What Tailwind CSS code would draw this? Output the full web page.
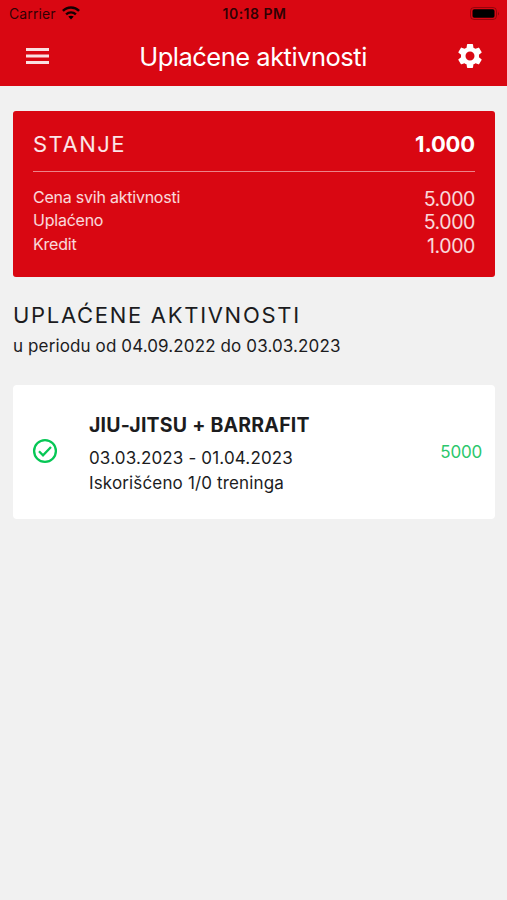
<!DOCTYPE html>
<html lang="sr">
<head>
<meta charset="utf-8">
<title>Uplaćene aktivnosti</title>
<script src="https://cdn.jsdelivr.net/npm/@tailwindcss/browser@4"></script>
</head>
<body class="bg-[#f1f1f1] font-['Inter',sans-serif] text-[#1c1c1e]">
<div class="h-[900px] w-[507px] overflow-hidden">
  <header class="h-[86px] bg-[#d90712]">
    <div class="grid h-[27px] grid-cols-3 items-center pl-[9px] pr-[7px] text-[13.5px] leading-[27px] text-black/80">
      <div class="flex items-center gap-[6px]">
        <span class="text-[14px] tracking-[0.1px]">Carrier</span>
        <svg class="h-[14px] w-[18px] -translate-y-px" viewBox="0 0 18 14" fill="none" stroke="#000" stroke-opacity=".9" stroke-width="2.400"><path d="M.9 4.900C5.300.3 12.700.3 17.100 4.900M4.100 8.300c2.800-2.600 7-2.600 9.800 0"/><path d="M6.300 10.600c1.500-1.300 3.900-1.300 5.400 0L9 13.400z" fill="#000" stroke="none"/></svg>
      </div>
      <span class="text-center text-[14px] font-semibold tracking-[0.5px]">10:18 PM</span>
      <svg class="h-[13px] w-[30px] justify-self-end" viewBox="0 0 30 13"><rect x=".5" y=".5" width="26" height="12" rx="3.500" fill="none" stroke="#000" stroke-opacity=".3"/><rect x="2.500" y="2.200" width="22" height="8.600" rx="1.800"/><path d="M28 4.500q1.500 2 0 4z" opacity=".4"/></svg>
    </div>
    <div class="flex h-[59px] items-center justify-between pl-[26px] pr-[22px] text-white">
      <svg class="h-[16px] w-[23px] -translate-y-px" viewBox="0 0 23 16" fill="currentColor" opacity=".88"><path d="M0 0h23v3H0zM0 6.500h23v3H0zM0 13h23V16H0z"/></svg>
      <h1 class="pl-[2px] pt-px text-[25.500px] tracking-[-0.500px]">Uplaćene aktivnosti</h1>
      <svg class="size-[30px] -translate-y-px" viewBox="0 0 24 24" fill="currentColor"><path d="M19.140 12.940c.04-.3.06-.61.06-.94 0-.32-.02-.64-.07-.94l2.030-1.580a.49.49 0 0 0 .12-.61l-1.920-3.320a.488.488 0 0 0-.59-.22l-2.390.96c-.5-.38-1.030-.7-1.620-.94l-.36-2.540a.484.484 0 0 0-.48-.41h-3.840c-.24 0-.43.17-.47.41l-.36 2.540c-.59.24-1.130.57-1.620.94l-2.390-.96c-.22-.08-.47 0-.59.22L2.740 8.870c-.12.21-.08.47.12.61l2.030 1.580c-.05.3-.09.63-.09.94s.02.64.07.94l-2.030 1.580a.49.49 0 0 0-.12.61l1.920 3.320c.12.22.37.29.59.22l2.390-.96c.5.38 1.030.7 1.620.94l.36 2.540c.05.24.24.41.48.41h3.840c.24 0 .44-.17.47-.41l.36-2.540c.59-.24 1.130-.56 1.620-.94l2.390.96c.22.08.47 0 .59-.22l1.920-3.320c.12-.22.07-.47-.12-.61zM12 15.600A3.600 3.600 0 1 1 12 8.400a3.600 3.600 0 0 1 0 7.200z"/></svg>
    </div>
  </header>
  <main class="pl-[13px] pr-[12px] pt-[25px]">
    <section class="h-[166px] rounded-[3px] bg-[#d90712] px-[20px] text-white">
      <div class="flex h-[61px] items-center justify-between border-b border-white/50 pt-[6px]">
        <h2 class="text-[22px] tracking-[1.500px] text-white/90">STANJE</h2>
        <span class="text-[22px] font-bold tracking-[-0.150px]">1.000</span>
      </div>
      <dl class="pt-[13.500px] text-[16px] text-white/85">
        <div class="flex h-[23.500px] justify-between leading-[23.500px]"><dt class="tracking-[-0.230px]">Cena svih aktivnosti</dt><dd class="pt-[2px] text-[19.500px] tracking-[-0.400px]">5.000</dd></div>
        <div class="flex h-[23.500px] justify-between leading-[23.500px]"><dt class="tracking-[-0.230px]">Uplaćeno</dt><dd class="pt-[2px] text-[19.500px] tracking-[-0.400px]">5.000</dd></div>
        <div class="flex h-[23.500px] justify-between leading-[23.500px]"><dt class="tracking-[-0.200px]">Kredit</dt><dd class="pt-[2px] text-[19.500px] tracking-[-0.400px]">1.000</dd></div>
      </dl>
    </section>
    <h2 class="mt-[23px] text-[22px] leading-[30px] tracking-[1.700px]">UPLAĆENE AKTIVNOSTI</h2>
    <p class="pt-px text-[17px] leading-[30px] tracking-[0.120px]">u periodu od 04.09.2022 do 03.03.2023</p>
    <section class="mt-[24px] flex h-[134px] items-center rounded-[4px] bg-white pl-[19px] pr-[13px]">
      <svg class="size-[26px] -translate-y-px" viewBox="0 0 26 26" fill="none" stroke="#06c755" stroke-width="2.300"><circle cx="13" cy="13" r="10.900"/><path d="m7 13.300 4 4 8-8.300"/></svg>
      <div class="ml-[31px] flex-1 pt-[2px]">
        <h3 class="text-[19.500px] font-bold leading-[28px] tracking-[0.220px]">JIU-JITSU + BARRAFIT</h3>
        <p class="pt-[7px] text-[17px] leading-[24.500px] tracking-[0.150px]">03.03.2023 - 01.04.2023<br>Iskorišćeno 1/0 treninga</p>
      </div>
      <span class="pt-[2px] text-[17px] tracking-[-0.200px] text-[#2bc76c]">5000</span>
    </section>
  </main>
</div>
</body>
</html>
